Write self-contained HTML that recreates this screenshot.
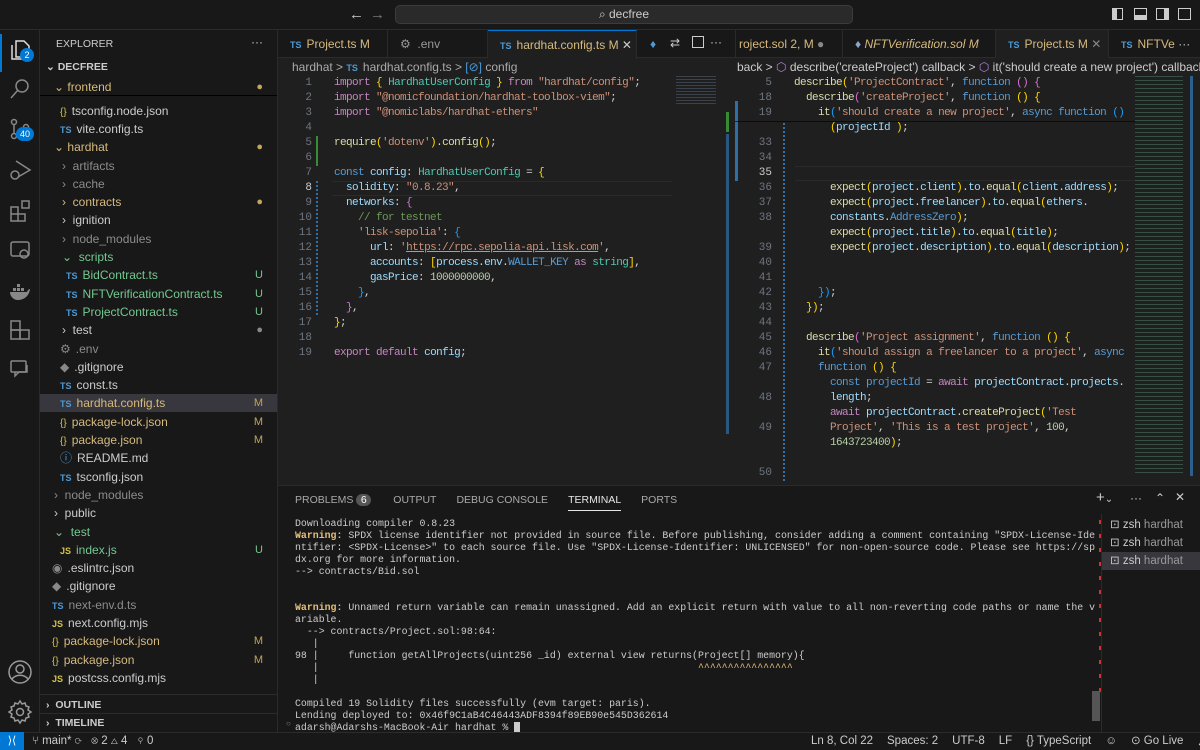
<!DOCTYPE html>
<html><head><meta charset="utf-8"><style>
*{margin:0;padding:0;box-sizing:border-box}
body{width:1200px;height:750px;overflow:hidden;background:#1f1f1f;font-family:"Liberation Sans",sans-serif;color:#ccc;position:relative;font-size:12px}
.abs{position:absolute}
#title{left:0;top:0;width:1200px;height:30px;background:#181818;border-bottom:1px solid #2b2b2b}
#search{left:395px;top:5px;width:458px;height:19px;background:#2a2a2a;border:1px solid #3c3c3c;border-radius:5px;text-align:center;font-size:12px;line-height:17px;color:#ccc}
#act{left:0;top:30px;width:40px;height:702px;background:#181818;border-right:1px solid #2b2b2b}
#side{left:40px;top:30px;width:238px;height:702px;background:#181818;border-right:1px solid #2b2b2b}
.row{position:absolute;left:0;width:237px;height:18px;line-height:18px;font-size:12px;white-space:nowrap}
.row .b{position:absolute;right:14px;top:0;color:#c4a35a;font-size:11px}
.y{color:#d7ba7d}.g{color:#73c991}.gr{color:#8c8c8c}
.ts{color:#4c9ad8;font-size:9px;font-weight:bold;margin-right:5px}
.js{color:#d4c24a;font-size:9px;font-weight:bold;margin-right:5px}
.br{color:#d4c24a;font-size:10px;margin-right:5px}
.tabs{top:30px;height:28px;background:#181818;border-bottom:1px solid #2b2b2b}
.tab{position:absolute;top:0;height:28px;line-height:28px;font-size:12px;padding-left:12px;border-right:1px solid #2b2b2b;white-space:nowrap}
.ln{position:absolute;text-align:right;color:#6e7681;font-family:"Liberation Mono",monospace;font-size:11px;width:24px}
.l{position:absolute;font-family:"Liberation Mono",monospace;font-size:11px;letter-spacing:-0.6px;white-space:pre;color:#9cdcfe}
.k{color:#569cd6}.kp{color:#c586c0}.s{color:#ce9178}.f{color:#dcdcaa}.t{color:#4ec9b0}.c{color:#6a9955}.w{color:#d4d4d4}.v{color:#9cdcfe}.n{color:#b5cea8}.p1{color:#ffd700}.p2{color:#da70d6}.p3{color:#179fff}
#panel{left:278px;top:485px;width:922px;height:247px;background:#181818;border-top:1px solid #2b2b2b;overflow:hidden}
.term{position:absolute;left:17px;font-family:"Liberation Mono",monospace;font-size:9.9px;white-space:pre;color:#ccc;line-height:12px}
#status{left:0;top:732px;width:1200px;height:18px;background:#181818;border-top:1px solid #2b2b2b;font-size:11.5px;line-height:17px;color:#ccc}
</style></head><body>

<div id="title" class="abs">
 <div class="abs" style="left:349px;top:6px;font-size:15px;color:#ccc">←</div>
 <div class="abs" style="left:370px;top:6px;font-size:15px;color:#777">→</div>
 <div id="search" class="abs">⌕ decfree</div>
 <div class="abs" style="left:1112px;top:8px;width:11px;height:12px;border:1.5px solid #ccc;border-left-width:5px"></div>
 <div class="abs" style="left:1134px;top:8px;width:13px;height:12px;border:1.5px solid #ccc;border-bottom-width:5px"></div>
 <div class="abs" style="left:1156px;top:8px;width:13px;height:12px;border:1.5px solid #ccc;border-right-width:5px"></div>
 <div class="abs" style="left:1178px;top:8px;width:13px;height:12px;border:1.5px solid #ccc"></div>
</div>

<div id="act" class="abs">
 <div class="abs" style="left:0;top:4px;width:2px;height:38px;background:#0078d4"></div>
 <svg class="abs" style="left:8px;top:8px" width="24" height="24" fill="none" stroke="#ddd" stroke-width="1.5"><path d="M8 3h8l5 5v11H8z M4 7v14h11"/></svg>
 <div class="abs" style="left:20px;top:18px;width:14px;height:14px;border-radius:7px;background:#0078d4;color:#fff;font-size:9px;text-align:center;line-height:14px">2</div>
 <svg class="abs" style="left:8px;top:47px" width="24" height="24" fill="none" stroke="#888" stroke-width="1.5"><circle cx="14" cy="9" r="6"/><path d="M10 13l-7 8"/></svg>
 <svg class="abs" style="left:8px;top:87px" width="24" height="24" fill="none" stroke="#888" stroke-width="1.5"><circle cx="6" cy="5" r="2.5"/><circle cx="6" cy="19" r="2.5"/><circle cx="18" cy="10" r="2.5"/><path d="M6 8v8M18 13c0 4-6 3-10 5"/></svg>
 <div class="abs" style="left:16px;top:97px;width:18px;height:14px;border-radius:7px;background:#0078d4;color:#fff;font-size:9px;text-align:center;line-height:14px">40</div>
 <svg class="abs" style="left:8px;top:128px" width="24" height="24" fill="none" stroke="#888" stroke-width="1.5"><path d="M8 3l14 9-12 7"/><circle cx="7" cy="17" r="4"/></svg>
 <svg class="abs" style="left:8px;top:168px" width="24" height="24" fill="none" stroke="#888" stroke-width="1.5"><path d="M3 9h7v7H3zM10 16h7v7h-7zM3 16h7v7H3zM14 3h7v7h-7z"/></svg>
 <svg class="abs" style="left:8px;top:208px" width="24" height="24" fill="none" stroke="#888" stroke-width="1.5"><rect x="3" y="4" width="18" height="14" rx="2"/><circle cx="16" cy="16" r="4"/></svg>
 <svg class="abs" style="left:8px;top:250px" width="24" height="24" fill="#888"><path d="M2 12h17c1-3 3-3 3-3-1 8-7 11-12 11-5 0-8-4-8-8zM5 8h3v3H5zM9 8h3v3H9zM13 8h3v3h-3zM9 4h3v3H9z"/></svg>
 <svg class="abs" style="left:8px;top:288px" width="24" height="24" fill="none" stroke="#888" stroke-width="1.5"><rect x="3" y="3" width="9" height="9"/><rect x="12" y="12" width="9" height="9"/><rect x="3" y="12" width="9" height="9"/></svg>
 <svg class="abs" style="left:8px;top:327px" width="24" height="24" fill="none" stroke="#888" stroke-width="1.5"><rect x="3" y="4" width="15" height="11" rx="1"/><path d="M7 15v4l4-4h8V8"/></svg>
 <svg class="abs" style="left:7px;top:629px" width="26" height="26" fill="none" stroke="#999" stroke-width="1.5"><circle cx="13" cy="13" r="11"/><circle cx="13" cy="10" r="4"/><path d="M5 20c4-5 12-5 16 0"/></svg>
 <svg class="abs" style="left:7px;top:669px" width="26" height="26" fill="none" stroke="#999" stroke-width="1.5"><circle cx="13" cy="13" r="3.5"/><path d="M13 2l2 3 3-1 1 3 3 1-1 3 3 2-3 2 1 3-3 1-1 3-3-1-2 3-2-3-3 1-1-3-3-1 1-3-3-2 3-2-1-3 3-1 1-3 3 1z"/></svg>
</div>

<div id="side" class="abs">
 <div class="abs" style="left:16px;top:8px;font-size:10.5px;color:#ccc">EXPLORER</div>
 <div class="abs" style="left:211px;top:5px;color:#ccc">···</div>
 <div class="row" style="top:28px;font-weight:bold;font-size:10.5px;padding-left:6px">⌄ DECFREE</div>
 <div class="row y" style="top:48px;padding-left:14px;border-bottom:1px solid #000">⌄ frontend<span class="b">●</span></div>
 <div class="row" style="top:72px;padding-left:20px"><span class="br">{}</span>tsconfig.node.json</div>
 <div class="row" style="top:90px;padding-left:20px"><span class="ts">TS</span>vite.config.ts</div>
 <div class="row y" style="top:108px;padding-left:14px">⌄ hardhat<span class="b">●</span></div>
 <div class="row gr" style="top:127px;padding-left:22px">›&nbsp; artifacts</div>
 <div class="row gr" style="top:145px;padding-left:22px">›&nbsp; cache</div>
 <div class="row y" style="top:163px;padding-left:22px">›&nbsp; contracts<span class="b">●</span></div>
 <div class="row" style="top:181px;padding-left:22px">›&nbsp; ignition</div>
 <div class="row gr" style="top:200px;padding-left:22px">›&nbsp; node_modules</div>
 <div class="row g" style="top:218px;padding-left:22px">⌄&nbsp; scripts</div>
 <div class="row g" style="top:236px;padding-left:26px"><span class="ts">TS</span>BidContract.ts<span class="b" style="color:#73c991">U</span></div>
 <div class="row g" style="top:255px;padding-left:26px"><span class="ts">TS</span>NFTVerificationContract.ts<span class="b" style="color:#73c991">U</span></div>
 <div class="row g" style="top:273px;padding-left:26px"><span class="ts">TS</span>ProjectContract.ts<span class="b" style="color:#73c991">U</span></div>
 <div class="row" style="top:291px;padding-left:22px">›&nbsp; test<span class="b" style="color:#888">●</span></div>
 <div class="row gr" style="top:310px;padding-left:20px"><span style="color:#888;margin-right:5px">⚙</span>.env</div>
 <div class="row" style="top:328px;padding-left:20px"><span style="color:#888;margin-right:5px">◆</span>.gitignore</div>
 <div class="row" style="top:346px;padding-left:20px"><span class="ts">TS</span>const.ts</div>
 <div class="row y" style="top:364px;padding-left:20px;background:#37373d"><span class="ts">TS</span>hardhat.config.ts<span class="b">M</span></div>
 <div class="row y" style="top:383px;padding-left:20px"><span class="br">{}</span>package-lock.json<span class="b">M</span></div>
 <div class="row y" style="top:401px;padding-left:20px"><span class="br">{}</span>package.json<span class="b">M</span></div>
 <div class="row" style="top:419px;padding-left:20px"><span style="color:#4c9ad8;margin-right:5px">ⓘ</span>README.md</div>
 <div class="row" style="top:438px;padding-left:20px"><span class="ts">TS</span>tsconfig.json</div>
 <div class="row gr" style="top:456px;padding-left:14px">›&nbsp; node_modules</div>
 <div class="row" style="top:474px;padding-left:14px">›&nbsp; public</div>
 <div class="row g" style="top:493px;padding-left:14px">⌄&nbsp; test</div>
 <div class="row g" style="top:511px;padding-left:20px"><span class="js">JS</span>index.js<span class="b" style="color:#73c991">U</span></div>
 <div class="row" style="top:529px;padding-left:12px"><span style="color:#888;margin-right:5px">◉</span>.eslintrc.json</div>
 <div class="row" style="top:547px;padding-left:12px"><span style="color:#888;margin-right:5px">◆</span>.gitignore</div>
 <div class="row gr" style="top:566px;padding-left:12px"><span class="ts">TS</span>next-env.d.ts</div>
 <div class="row" style="top:584px;padding-left:12px"><span class="js">JS</span>next.config.mjs</div>
 <div class="row y" style="top:602px;padding-left:12px"><span class="br">{}</span>package-lock.json<span class="b">M</span></div>
 <div class="row y" style="top:621px;padding-left:12px"><span class="br">{}</span>package.json<span class="b">M</span></div>
 <div class="row" style="top:639px;padding-left:12px"><span class="js">JS</span>postcss.config.mjs</div>
 <div class="row" style="top:664px;height:20px;border-top:1px solid #2b2b2b;padding-left:6px;font-weight:bold;font-size:10.5px;line-height:20px;background:#181818">›&nbsp; OUTLINE</div>
 <div class="row" style="top:683px;height:19px;border-top:1px solid #2b2b2b;padding-left:6px;font-weight:bold;font-size:10.5px;line-height:19px;background:#181818">›&nbsp; TIMELINE</div>
</div>

<!-- editor 1 -->
<div class="abs tabs" style="left:278px;width:457px">
 <div class="tab" style="left:0;width:110px"><span class="ts">TS</span><span class="y">Project.ts M</span></div>
 <div class="tab" style="left:110px;width:100px;color:#999;padding-left:12px">⚙ &nbsp;.env</div>
 <div class="tab" style="left:210px;width:149px;background:#1f1f1f;border-top:1px solid #0078d4;height:29px"><span class="ts">TS</span><span class="y">hardhat.config.ts M</span> <span style="color:#ccc">✕</span></div>
 <div class="abs" style="left:372px;top:7px;color:#4c9ad8">♦</div>
 <div class="abs" style="left:392px;top:6px;color:#ccc">⇄</div>
 <div class="abs" style="left:414px;top:6px;width:12px;height:12px;border:1.5px solid #ccc"></div>
 <div class="abs" style="left:432px;top:5px;color:#ccc">···</div>
</div>
<div class="abs" style="left:292px;top:60px;font-size:12px;color:#aaa">hardhat &gt; <span class="ts">TS</span>hardhat.config.ts &gt; <span style="color:#4c9ad8">[⊘]</span> config</div>
<div class="abs" style="left:278px;top:76px;width:457px;height:409px">
 <div class="ln" style="left:10px;top:0;line-height:15px">1<br>2<br>3<br>4<br>5<br>6<br>7<br><span style="color:#ccc">8</span><br>9<br>10<br>11<br>12<br>13<br>14<br>15<br>16<br>17<br>18<br>19</div>
 <div class="abs" style="left:38px;top:60px;width:2px;height:30px;background:#388a34"></div>
 <div class="abs" style="left:38px;top:105px;width:2px;height:135px;background:repeating-linear-gradient(#2f6fa8 0 2px,transparent 2px 4px)"></div>
 <div class="abs" style="left:54px;top:105px;width:340px;height:15px;border-top:1px solid #2a2a2a;border-bottom:1px solid #2a2a2a"></div>
 <div class="l" style="left:56px;top:0;line-height:15px"><span class="kp">import</span> <span class="p1">{</span> <span class="t">HardhatUserConfig</span> <span class="p1">}</span> <span class="kp">from</span> <span class="s">"hardhat/config"</span><span class="w">;</span>
<span class="kp">import</span> <span class="s">"@nomicfoundation/hardhat-toolbox-viem"</span><span class="w">;</span>
<span class="kp">import</span> <span class="s">"@nomiclabs/hardhat-ethers"</span>

<span class="f">require</span><span class="p1">(</span><span class="s">'dotenv'</span><span class="p1">)</span><span class="w">.</span><span class="f">config</span><span class="p1">()</span><span class="w">;</span>

<span class="k">const</span> <span class="v">config</span><span class="w">:</span> <span class="t">HardhatUserConfig</span> <span class="w">=</span> <span class="p1">{</span>
  solidity<span class="w">:</span> <span class="s">"0.8.23"</span><span class="w">,</span>
  networks<span class="w">:</span> <span class="p2">{</span>
    <span class="c">// for testnet</span>
    <span class="s">'lisk-sepolia'</span><span class="w">:</span> <span class="p3">{</span>
      url<span class="w">:</span> <span class="s">'<u>https://rpc.sepolia-api.lisk.com</u>'</span><span class="w">,</span>
      accounts<span class="w">:</span> <span class="p1">[</span>process<span class="w">.</span>env<span class="w">.</span><span class="k">WALLET_KEY</span> <span class="kp">as</span> <span class="t">string</span><span class="p1">]</span><span class="w">,</span>
      gasPrice<span class="w">:</span> <span class="n">1000000000</span><span class="w">,</span>
    <span class="p3">}</span><span class="w">,</span>
  <span class="p2">}</span><span class="w">,</span>
<span class="p1">}</span><span class="w">;</span>

<span class="kp">export</span> <span class="kp">default</span> <span class="v">config</span><span class="w">;</span></div>
 <div class="abs" style="left:398px;top:0;width:40px;height:30px;opacity:.5;background:repeating-linear-gradient(#567 0 1px,transparent 1px 3px)"></div>
 <div class="abs" style="left:448px;top:36px;width:3px;height:20px;background:#388a34"></div>
 <div class="abs" style="left:448px;top:58px;width:3px;height:300px;background:#2f6fa8;opacity:.7"></div>
</div>

<!-- editor 2 -->
<div class="abs tabs" style="left:735px;width:465px;border-left:1px solid #2b2b2b">
 <div class="tab" style="left:0;width:107px;padding-left:3px"><span class="y">roject.sol 2, M</span> <span style="color:#888">●</span></div>
 <div class="tab" style="left:107px;width:153px;font-style:italic"><span style="color:#8fa6c9">♦</span> <span class="y">NFTVerification.sol M</span></div>
 <div class="tab" style="left:260px;width:113px;background:#1f1f1f"><span class="ts">TS</span><span class="y">Project.ts M</span> <span style="color:#888">✕</span></div>
 <div class="tab" style="left:373px;width:92px;border:none"><span class="ts">TS</span><span class="y">NFTVe</span> <span style="color:#ccc">···</span></div>
</div>
<div class="abs" style="left:737px;top:60px;font-size:12px;color:#ccc;white-space:nowrap">back &gt; <span style="color:#b180d7">⬡</span> describe('createProject') callback &gt; <span style="color:#b180d7">⬡</span> it('should create a new project') callback</div>
<div class="abs" style="left:735px;top:76px;width:465px;height:409px;overflow:hidden">
 <div class="abs" style="left:0;top:25px;width:3px;height:80px;background:#2f6fa8"></div>
 <div class="ln" style="left:13px;top:0;line-height:15px">5<br>18<br>19<br><br>33<br>34<br><span style="color:#ccc">35</span><br>36<br>37<br>38<br><br>39<br>40<br>41<br>42<br>43<br>44<br>45<br>46<br>47<br><br>48<br><br>49<br><br><br>50</div>
 <div class="abs" style="left:48px;top:47px;width:2px;height:360px;background:repeating-linear-gradient(#2f6fa8 0 2px,transparent 2px 4px)"></div>
 <div class="abs" style="left:60px;top:90px;width:340px;height:15px;border-top:1px solid #2a2a2a;border-bottom:1px solid #2a2a2a"></div>
 <div class="abs" style="left:0;top:45px;width:400px;height:1px;background:#000;opacity:.6"></div>
 <div class="l" style="left:59px;top:0;line-height:15px;color:#9cdcfe"><span class="f">describe</span><span class="p1">(</span><span class="s">'ProjectContract'</span><span class="w">,</span> <span class="k">function</span> <span class="p2">()</span> <span class="p2">{</span>
  <span class="f">describe</span><span class="p2">(</span><span class="s">'createProject'</span><span class="w">,</span> <span class="k">function</span> <span class="p1">()</span> <span class="p1">{</span>
    <span class="f">it</span><span class="p3">(</span><span class="s">'should create a new project'</span><span class="w">,</span> <span class="k">async</span> <span class="k">function</span> <span class="p3">()</span>
      <span class="p1">(</span>projectId <span class="p1">)</span><span class="w">;</span>



      <span class="f">expect</span><span class="p1">(</span>project<span class="w">.</span>client<span class="p1">)</span><span class="w">.</span>to<span class="w">.</span><span class="f">equal</span><span class="p1">(</span>client<span class="w">.</span>address<span class="p1">)</span><span class="w">;</span>
      <span class="f">expect</span><span class="p1">(</span>project<span class="w">.</span>freelancer<span class="p1">)</span><span class="w">.</span>to<span class="w">.</span><span class="f">equal</span><span class="p1">(</span>ethers<span class="w">.</span>
      constants<span class="w">.</span><span class="k">AddressZero</span><span class="p1">)</span><span class="w">;</span>
      <span class="f">expect</span><span class="p1">(</span>project<span class="w">.</span>title<span class="p1">)</span><span class="w">.</span>to<span class="w">.</span><span class="f">equal</span><span class="p1">(</span>title<span class="p1">)</span><span class="w">;</span>
      <span class="f">expect</span><span class="p1">(</span>project<span class="w">.</span>description<span class="p1">)</span><span class="w">.</span>to<span class="w">.</span><span class="f">equal</span><span class="p1">(</span>description<span class="p1">)</span><span class="w">;</span>


    <span class="p3">}</span><span class="p3">)</span><span class="w">;</span>
  <span class="p1">})</span><span class="w">;</span>

  <span class="f">describe</span><span class="p2">(</span><span class="s">'Project assignment'</span><span class="w">,</span> <span class="k">function</span> <span class="p1">()</span> <span class="p1">{</span>
    <span class="f">it</span><span class="p3">(</span><span class="s">'should assign a freelancer to a project'</span><span class="w">,</span> <span class="k">async</span>
    <span class="k">function</span> <span class="p1">()</span> <span class="p1">{</span>
      <span class="k">const</span> <span class="k">projectId</span> <span class="w">=</span> <span class="kp">await</span> projectContract<span class="w">.</span>projects<span class="w">.</span>
      length<span class="w">;</span>
      <span class="kp">await</span> projectContract<span class="w">.</span><span class="f">createProject</span><span class="p1">(</span><span class="s">'Test</span>
<span class="s">      Project'</span><span class="w">,</span> <span class="s">'This is a test project'</span><span class="w">,</span> <span class="n">100</span><span class="w">,</span>
      <span class="n">1643723400</span><span class="p1">)</span><span class="w">;</span>
</div>
 <div class="abs" style="left:400px;top:0;width:48px;height:400px;opacity:.35;background:repeating-linear-gradient(#6a8 0 1px,transparent 1px 4px)"></div>
 <div class="abs" style="left:455px;top:0;width:3px;height:400px;background:#2f6fa8;opacity:.8"></div>
</div>

<!-- panel -->
<div id="panel" class="abs">
 <div class="abs" style="left:17px;top:8px;font-size:10.5px;color:#aaa;white-space:nowrap">PROBLEMS <span style="display:inline-block;background:#555;color:#fff;border-radius:8px;width:15px;text-align:center">6</span><span style="margin-left:22px">OUTPUT</span><span style="margin-left:20px">DEBUG CONSOLE</span><span style="margin-left:20px;color:#e7e7e7;border-bottom:1px solid #e7e7e7;padding-bottom:4px">TERMINAL</span><span style="margin-left:20px">PORTS</span></div>
 <div class="abs" style="left:818px;top:3px;color:#ccc;font-size:15px">+<span style="font-size:10px">⌄</span></div>
 <div class="abs" style="left:852px;top:5px;color:#ccc">···</div>
 <div class="abs" style="left:877px;top:5px;color:#ccc">⌃</div>
 <div class="abs" style="left:897px;top:4px;color:#ccc">✕</div>
 <div class="abs" style="left:823px;top:28px;width:99px;height:219px;border-left:1px solid #2b2b2b"></div>
 <div class="abs" style="left:824px;top:66px;width:98px;height:18px;background:#37373d"></div>
 <div class="abs" style="left:832px;top:30px;font-size:11.5px;line-height:18px;color:#ccc;white-space:nowrap">⊡ zsh <span style="color:#999">hardhat</span><br>⊡ zsh <span style="color:#999">hardhat</span><br>⊡ zsh <span style="color:#999">hardhat</span></div>
 <div class="abs" style="left:821px;top:34px;width:2px;height:180px;background:repeating-linear-gradient(#c33 0 4px,transparent 4px 14px)"></div>
 <div class="term" style="top:32px">Downloading compiler 0.8.23
<span style="color:#e5c07b;font-weight:bold">Warning:</span> SPDX license identifier not provided in source file. Before publishing, consider adding a comment containing "SPDX-License-Ide
ntifier: &lt;SPDX-License&gt;" to each source file. Use "SPDX-License-Identifier: UNLICENSED" for non-open-source code. Please see https://sp
dx.org for more information.
--&gt; contracts/Bid.sol


<span style="color:#e5c07b;font-weight:bold">Warning:</span> Unnamed return variable can remain unassigned. Add an explicit return with value to all non-reverting code paths or name the v
ariable.
  --&gt; contracts/Project.sol:98:64:
   |
98 |     function getAllProjects(uint256 _id) external view returns(Project[] memory){
   |                                                                <span style="color:#e5c07b">^^^^^^^^^^^^^^^^</span>
   |

Compiled 19 Solidity files successfully (evm target: paris).
Lending deployed to: 0x46f9C1aB4C46443ADF8394f89EB90e545D362614
adarsh@Adarshs-MacBook-Air hardhat % <span style="background:#ccc">&nbsp;</span></div>
 <div class="abs" style="left:8px;top:233px;font-size:8px;color:#888">○</div>
 <div class="abs" style="left:814px;top:205px;width:8px;height:30px;background:#555"></div>
</div>

<div id="status" class="abs">
 <div class="abs" style="left:0;top:-1px;width:24px;height:18px;background:#0078d4;color:#fff;text-align:center;font-size:11px;line-height:18px">⟩⟨</div>
 <div class="abs" style="left:32px;top:0;white-space:nowrap">⑂ main* ⟳ &nbsp; ⊗ 2 △ 4 &nbsp; ⚲ 0</div>
 <div class="abs" style="left:811px;top:0;white-space:nowrap">Ln 8, Col 22<span style="margin-left:14px">Spaces: 2</span><span style="margin-left:14px">UTF-8</span><span style="margin-left:14px">LF</span><span style="margin-left:14px">{} TypeScript</span><span style="margin-left:14px">☺</span><span style="margin-left:14px">⊙ Go Live</span><span style="margin-left:14px">🔔︎</span></div>
</div>
</body></html>
